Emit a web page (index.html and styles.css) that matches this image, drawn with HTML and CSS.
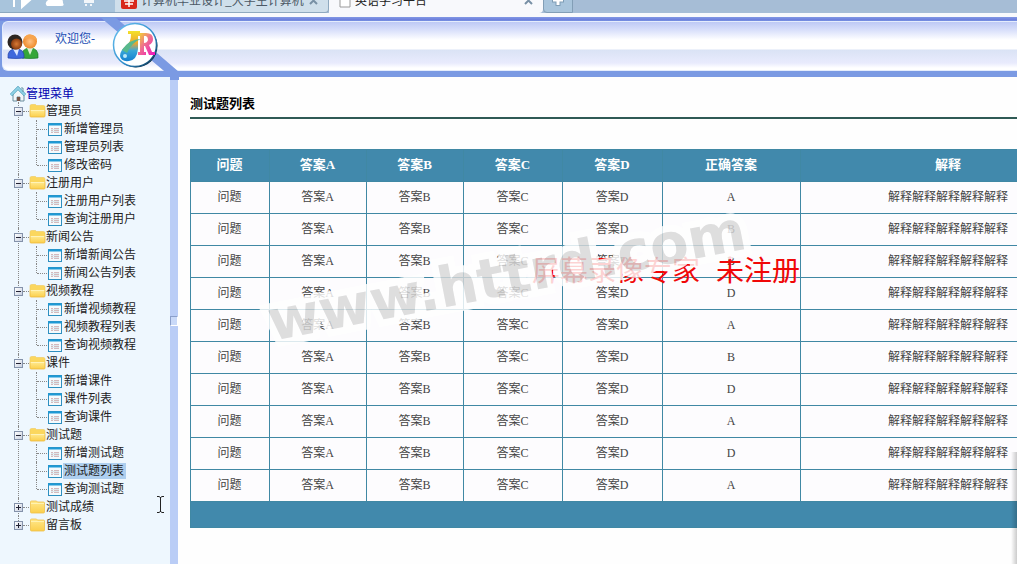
FILE: index.html
```html
<!DOCTYPE html>
<html lang="zh-CN">
<head>
<meta charset="utf-8">
<title>英语学习平台</title>
<link rel="stylesheet" href="styles.css">
</head>
<body>
<svg class="sprites" aria-hidden="true">
  <defs>
    <linearGradient id="fold" x1="0" y1="0" x2="0" y2="1"><stop offset="0" stop-color="#ffe88c"/><stop offset="1" stop-color="#fbcf4c"/></linearGradient>
    <symbol id="i-open" viewBox="0 0 16 14">
      <path d="M.5 2q0-1.500 1.500-1.500h4l1 1h7q1.500 0 1.500 1.500v4H.5z" fill="#fbd75e" stroke="#f0c95a" stroke-width=".6"/>
      <path d="M.5 6.500h15v5.500q0 1-1 1h-13q-1 0-1-1z" fill="url(#fold)" stroke="#edb93c" stroke-width=".8"/>
      <path d="M1 6.500h14" stroke="#fff3b8"/>
    </symbol>
    <symbol id="i-closed" viewBox="0 0 16 14">
      <path d="M1 2q0-1 1-1h5l1 1h6q1 0 1 1v9q0 1-1 1H2q-1 0-1-1z" fill="url(#fold)" stroke="#efc04a" stroke-width=".8"/>
      <path d="M1.500 3.500h13" stroke="#fff2b0"/>
    </symbol>
    <symbol id="i-page" viewBox="0 0 14 13">
      <rect x=".5" y=".5" width="13" height="12" fill="#f4fafd" stroke="#2e8fc0"/>
      <path d="M0 1.500h14" stroke="#1e9ad6" stroke-width="2"/>
      <path d="M3 5.500h2m1 0h5M3 7.500h2m1 0h5M3 9.500h2m1 0h5" stroke="#d3b9bd"/>
      <path d="M3 6.500h8M3 8.500h8" stroke="#c9dbe2" stroke-width=".6"/>
    </symbol>
  </defs>
</svg>

<nav class="tabs" aria-label="标签页">
  <div class="tools">
    <svg width="95" height="26" viewBox="0 0 95 26" aria-hidden="true">
      <path d="M14 9v11M18 9h4v11l8-7-8-7" fill="#fff" stroke="#fff" stroke-width="2"/>
      <path d="M47 19q-3-3 1-6 3-6 9-3 6 0 6 6 2 3-2 3z" fill="#fff"/>
      <path d="M84 8h10v8H84zM85 17h2v2h-2zm5 0h2v2h-2z" fill="#f2f6fa"/>
    </svg>
  </div>
  <div class="tab">
    <svg width="16" height="20" viewBox="0 0 16 20" aria-hidden="true"><rect y="2" width="16" height="17" rx="2" fill="#d8281c"/><path d="M3 11h10M8 7v10M4 14h8M5 6v4M11 6v4" stroke="#fff" stroke-width="1.500"/></svg>
    <span class="tab-name">计算机毕业设计_大学生计算机</span>
    <button class="tab-close" aria-label="关闭"><svg width="9" height="9" viewBox="0 0 9 9"><path d="M1 1l7 7M8 1L1 8" stroke="#7890a5" stroke-width="2"/></svg></button>
  </div>
  <div class="tab active">
    <svg width="12" height="16" viewBox="0 0 12 16" aria-hidden="true"><path d="M1 1h7l3 3v11H1z" fill="#fff" stroke="#9a9a9a"/></svg>
    <span class="tab-name">英语学习平台</span>
    <button class="tab-close" aria-label="关闭"><svg width="9" height="9" viewBox="0 0 9 9"><path d="M1 1l7 7M8 1L1 8" stroke="#7890a5" stroke-width="2"/></svg></button>
  </div>
  <button class="tab-new" aria-label="新标签页"><svg width="12" height="12" viewBox="0 0 12 12"><path d="M6 0v12M0 6h12" stroke="#7f9db5" stroke-width="5"/><path d="M6 1v10M1 6h10" stroke="#fff" stroke-width="3"/></svg></button>
</nav>

<header class="banner">
  <div class="panel">
    <svg class="users" width="32" height="26" viewBox="0 0 32 26" aria-hidden="true">
      <defs>
        <radialGradient id="f1"><stop offset="0" stop-color="#d87a35"/><stop offset="1" stop-color="#8a3b10"/></radialGradient>
        <radialGradient id="f2"><stop offset="0" stop-color="#ffc182"/><stop offset="1" stop-color="#ee8a2a"/></radialGradient>
      </defs>
      <path d="M15 25q-1-10 8-10t8 10q-8 1-16 0z" fill="#35a63a" stroke="#1b7a2a" stroke-width=".7"/>
      <path d="M20 15l3 7 3-7z" fill="#d9f0d0"/>
      <circle cx="23" cy="8.500" r="7" fill="url(#f2)"/>
      <path d="M17 6q2-6 8-4 5 1 5 6-4-4-13-2z" fill="#f7a54e"/>
      <path d="M1 25q-1-9 8-9t8 9q-8 1-16 0z" fill="#3f68dc" stroke="#2142a8" stroke-width=".7"/>
      <path d="M6 16l4 7 2-7z" fill="#dce6ff"/>
      <circle cx="8" cy="9" r="7.500" fill="#2c2622"/>
      <ellipse cx="9.500" cy="11" rx="5.500" ry="5.500" fill="url(#f1)"/>
    </svg>
    <span class="welcome">欢迎您-</span>
  </div>
  <svg class="logo" width="84" height="63" viewBox="0 0 84 63" role="img" aria-label="JR">
    <defs>
      <linearGradient id="jg" x1="0" y1="0" x2="0" y2="1"><stop offset="0" stop-color="#f3e22a"/><stop offset=".4" stop-color="#eda52c"/><stop offset=".65" stop-color="#38a7d8"/><stop offset="1" stop-color="#1480d0"/></linearGradient>
      <linearGradient id="rg" x1="0" y1="0" x2="1" y2="1"><stop offset="0" stop-color="#f4dc28"/><stop offset=".45" stop-color="#ee6f90"/><stop offset="1" stop-color="#f010c0"/></linearGradient>
      <linearGradient id="ring" x1="0" y1="0" x2="1" y2="1"><stop offset="0" stop-color="#6cc3f2"/><stop offset=".6" stop-color="#2f8dcc"/><stop offset="1" stop-color="#082c48"/></linearGradient>
    </defs>
    <path d="M5 0h15L84 55v8h-9v-4z" fill="#7b9ae3"/>
    <circle cx="41" cy="29" r="21.500" fill="#0c3048"/>
    <circle cx="40" cy="28" r="21.500" fill="#fff" stroke="url(#ring)" stroke-width="1.500"/>
    <path d="M33 14h12v3h-2v15q-1 11-9 12-8 1-9-5 0-6 7-11 4-3 4-11h-3z" fill="url(#jg)"/>
    <path d="M43 16h8q7 0 7 6 0 4-4 6l3 7h3v3h-6l-4-9h-1v6h2v3h-8v-3h2V19h-2z" fill="url(#rg)"/>
    <path d="M49 19h2q2 1 2 4-1 3-4 3z" fill="#fff"/>
    <path d="M27 33q7-11 19-11-9 3-14 14z" fill="#58b88c"/>
    <circle cx="30" cy="39" r="2" fill="#b8e8fa"/>
  </svg>
</header>

<div class="frame">
  <aside class="sidebar">
    <a class="root" href="#"><svg width="16" height="16" viewBox="0 0 16 16" aria-hidden="true"><path d="M3 8v7h4v-4h3v4h4V8L8 3z" fill="#f1f6f8" stroke="#6a8e9e"/><path d="M1 9l7-7 7 7" fill="none" stroke="#398fae" stroke-width="3"/><path d="M1 9l7-7 7 7" fill="none" stroke="#8fd2e5" stroke-width="2"/><path d="M11 2h2v4" fill="none" stroke="#6495a5"/><path d="M7 11h3v4H7z" fill="#765344"/></svg>管理菜单</a>
    <ul class="tree">
      <li><div class="node"><button class="toggle" aria-label="收起"></button><svg class="folder"><use href="#i-open"/></svg>管理员</div>
        <ul><li><a href="#"><svg><use href="#i-page"/></svg><span>新增管理员</span></a></li><li><a href="#"><svg><use href="#i-page"/></svg><span>管理员列表</span></a></li><li><a href="#"><svg><use href="#i-page"/></svg><span>修改密码</span></a></li></ul></li>
      <li><div class="node"><button class="toggle" aria-label="收起"></button><svg class="folder"><use href="#i-open"/></svg>注册用户</div>
        <ul><li><a href="#"><svg><use href="#i-page"/></svg><span>注册用户列表</span></a></li><li><a href="#"><svg><use href="#i-page"/></svg><span>查询注册用户</span></a></li></ul></li>
      <li><div class="node"><button class="toggle" aria-label="收起"></button><svg class="folder"><use href="#i-open"/></svg>新闻公告</div>
        <ul><li><a href="#"><svg><use href="#i-page"/></svg><span>新增新闻公告</span></a></li><li><a href="#"><svg><use href="#i-page"/></svg><span>新闻公告列表</span></a></li></ul></li>
      <li><div class="node"><button class="toggle" aria-label="收起"></button><svg class="folder"><use href="#i-open"/></svg>视频教程</div>
        <ul><li><a href="#"><svg><use href="#i-page"/></svg><span>新增视频教程</span></a></li><li><a href="#"><svg><use href="#i-page"/></svg><span>视频教程列表</span></a></li><li><a href="#"><svg><use href="#i-page"/></svg><span>查询视频教程</span></a></li></ul></li>
      <li><div class="node"><button class="toggle" aria-label="收起"></button><svg class="folder"><use href="#i-open"/></svg>课件</div>
        <ul><li><a href="#"><svg><use href="#i-page"/></svg><span>新增课件</span></a></li><li><a href="#"><svg><use href="#i-page"/></svg><span>课件列表</span></a></li><li><a href="#"><svg><use href="#i-page"/></svg><span>查询课件</span></a></li></ul></li>
      <li><div class="node"><button class="toggle" aria-label="收起"></button><svg class="folder"><use href="#i-open"/></svg>测试题</div>
        <ul><li><a href="#"><svg><use href="#i-page"/></svg><span>新增测试题</span></a></li><li><a href="#" aria-current="page"><svg><use href="#i-page"/></svg><span>测试题列表</span></a></li><li><a href="#"><svg><use href="#i-page"/></svg><span>查询测试题</span></a></li></ul></li>
      <li><div class="node"><button class="toggle plus" aria-label="展开"></button><svg class="folder"><use href="#i-closed"/></svg>测试成绩</div></li>
      <li><div class="node"><button class="toggle plus" aria-label="展开"></button><svg class="folder"><use href="#i-closed"/></svg>留言板</div></li>
    </ul>
    <svg class="ibeam" width="9" height="17" viewBox="0 0 9 17" aria-hidden="true"><path d="M1 .5h2l1.500 1L6 .5h2M4.500 1v15M1 16.500h2l1.500-1 1.500 1h2" fill="none" stroke="#222"/></svg>
  </aside>
  <div class="splitter"><button class="grip" aria-label="折叠菜单"></button></div>
  <main class="content">
    <h1>测试题列表</h1>
    <table class="grid">
      <colgroup><col class="c-q"><col class="c-a"><col class="c-a"><col class="c-c"><col class="c-d"><col class="c-r"><col></colgroup>
      <thead><tr><th>问题</th><th>答案A</th><th>答案B</th><th>答案C</th><th>答案D</th><th>正确答案</th><th>解释</th></tr></thead>
      <tbody>
        <tr><td>问题</td><td>答案A</td><td>答案B</td><td>答案C</td><td>答案D</td><td>A</td><td>解释解释解释解释解释</td></tr>
        <tr><td>问题</td><td>答案A</td><td>答案B</td><td>答案C</td><td>答案D</td><td>B</td><td>解释解释解释解释解释</td></tr>
        <tr><td>问题</td><td>答案A</td><td>答案B</td><td>答案C</td><td>答案D</td><td>B</td><td>解释解释解释解释解释</td></tr>
        <tr><td>问题</td><td>答案A</td><td>答案B</td><td>答案C</td><td>答案D</td><td>D</td><td>解释解释解释解释解释</td></tr>
        <tr><td>问题</td><td>答案A</td><td>答案B</td><td>答案C</td><td>答案D</td><td>A</td><td>解释解释解释解释解释</td></tr>
        <tr><td>问题</td><td>答案A</td><td>答案B</td><td>答案C</td><td>答案D</td><td>B</td><td>解释解释解释解释解释</td></tr>
        <tr><td>问题</td><td>答案A</td><td>答案B</td><td>答案C</td><td>答案D</td><td>D</td><td>解释解释解释解释解释</td></tr>
        <tr><td>问题</td><td>答案A</td><td>答案B</td><td>答案C</td><td>答案D</td><td>A</td><td>解释解释解释解释解释</td></tr>
        <tr><td>问题</td><td>答案A</td><td>答案B</td><td>答案C</td><td>答案D</td><td>D</td><td>解释解释解释解释解释</td></tr>
        <tr><td>问题</td><td>答案A</td><td>答案B</td><td>答案C</td><td>答案D</td><td>A</td><td>解释解释解释解释解释</td></tr>
      </tbody>
      <tfoot><tr><td colspan="7"></td></tr></tfoot>
    </table>
    <div class="notice"><span>屏幕录像专家</span><span>未注册</span></div>
    <div class="watermark">www.httrd.com</div>
    <div class="edge-shadow"></div>
  </main>
</div>
</body>
</html>
```
FILE: styles.css
```css
* { box-sizing: border-box; }
body {
  margin: 0;
  min-height: 100vh;
  display: flex;
  flex-direction: column;
  overflow: hidden;
  background: #fefefe;
  font: 12px/18px "Liberation Serif", "Noto Sans CJK SC", serif;
  color: #333;
}
button { padding: 0; border: 0; background: none; font: inherit; }
ul { margin: 0; padding: 0; list-style: none; }
a { color: inherit; text-decoration: none; }
svg { display: block; flex: none; }
.sprites { position: absolute; width: 0; height: 0; }

/* browser tabs */
.tabs {
  display: flex;
  align-items: flex-end;
  height: 17px;
  padding-bottom: 4px;
  overflow: hidden;
  background: linear-gradient(#a6bdd6 13px, #f8f9fc 13px);
  font-family: "Noto Sans CJK SC", sans-serif;
}
.tools { width: 115px; height: 26px; border-bottom: 1px solid #8ba7bf; background: #a8c4dc; }
.tab {
  display: flex;
  align-items: center;
  gap: 4px;
  width: 214px;
  height: 26px;
  padding: 0 10px 0 6px;
  border: 1px solid #8fa9bf;
  border-left: 0;
  border-radius: 0 0 4px 0;
  background: #cfdfeb;
  color: #4c5966;
}
.tab.active { border: 0; background: #f8f9fc; color: #222; padding-left: 10px; }
.tab-name { flex: 1; white-space: nowrap; overflow: hidden; }
.tab-new {
  display: grid;
  place-items: center;
  width: 30px;
  height: 26px;
  border: 1px solid #829eb6;
  border-radius: 0 0 0 4px;
  background: #a9c5dc;
}

/* banner */
.banner {
  position: relative;
  padding: 4px 0 6px 2px;
  background: linear-gradient(#8298e4, #6c7ddc 3px, #7b9ae3 4px, #7b9ae3);
}
.panel {
  display: flex;
  align-items: center;
  gap: 16px;
  height: 50px;
  padding-left: 4px;
  border: 1px solid #e4ecfc;
  border-right: 0;
  border-radius: 6px 0 0 6px;
  background: linear-gradient(#bdc9f5, #d8dffa 8px, #fff 18px, #fff 27px, #dae3f5 28px, #e9ebfd 41px, #fff 46px);
}
.welcome { padding-bottom: 14px; color: #1c4fb4; }
.logo { position: absolute; left: 95px; top: 0; z-index: 1; }

/* frame */
.frame { flex: 1; display: flex; }
.sidebar { position: relative; flex: none; width: 170px; padding: 8px 0 0 10px; background: #eef7fe; color: #222; }
.root { display: flex; align-items: center; height: 17px; color: #0000b0; }
.tree { position: relative; }
.tree > li { position: relative; }
.tree > li::before { content: ""; position: absolute; left: 8px; top: 0; bottom: 0; border-left: 1px dotted #888; }
.tree > li:last-child::before { bottom: 9px; }
.node { position: relative; display: flex; align-items: center; height: 18px; padding-left: 4px; }
.node::before { content: ""; position: absolute; left: 13px; width: 6px; top: 9px; border-top: 1px dotted #888; }
.toggle {
  position: relative;
  width: 9px;
  height: 9px;
  margin-right: 6px;
  border: 1px solid #8492aa;
  background: linear-gradient(135deg, #fff, #c8d0e0);
}
.toggle::before { content: ""; position: absolute; left: 1px; right: 1px; top: 3px; border-top: 1px solid #223; }
.plus::after { content: ""; position: absolute; top: 1px; bottom: 1px; left: 3px; border-left: 1px solid #223; }
.folder { width: 17px; height: 14px; }
.tree ul li { position: relative; padding-left: 38px; }
.tree ul li::before { content: ""; position: absolute; left: 26px; top: 0; bottom: 0; border-left: 1px dotted #888; }
.tree ul li:last-child::before { bottom: 9px; }
.tree ul li::after { content: ""; position: absolute; left: 27px; top: 9px; width: 10px; border-top: 1px dotted #888; }
.tree a { display: flex; align-items: center; gap: 1px; height: 18px; }
.tree a svg { width: 14px; height: 13px; }
.tree a span { padding: 0 2px 0 1px; line-height: 16px; }
.tree a[aria-current] span { background: #aecfef; }
.ibeam { position: absolute; left: 156px; top: 419px; }
.splitter { flex: none; display: flex; align-items: center; width: 8px; background: #bacdf6; }
.grip { width: 8px; height: 10px; border: 1px solid; border-color: #8b9fca #fff #fff #8b9fca; background: #c9d9f8; }

/* content */
.content { position: relative; flex: 1; min-width: 0; padding: 18px 0 0 12px; overflow: hidden; }
h1 { margin: 0 0 30px; padding-bottom: 4px; border-bottom: 2px solid #2f5a55; font-size: 13px; line-height: 18px; color: #000; }
.grid { width: calc(100% + 80px); table-layout: fixed; border-collapse: collapse; text-align: center; }
.c-q { width: 79px; }
.c-a { width: 97px; }
.c-c { width: 99px; }
.c-d { width: 100px; }
.c-r { width: 138px; }
.grid th, .grid td { height: 32px; padding: 0 1px 2px 0; border: 1px solid #4088a4; }
.grid th { background: #4189ac; color: #fff; font-size: 13px; }
.grid td { background: #fdfcfe; color: #444; }
.grid tfoot td { height: 26px; background: #4189ac; }

/* overlays */
.notice {
  position: absolute;
  left: 354px;
  top: 174px;
  display: flex;
  gap: 16px;
  font: 400 28px/36px "Noto Sans CJK SC", sans-serif;
  color: #f00808;
  white-space: nowrap;
}
.watermark {
  position: absolute;
  left: 86px;
  top: 163px;
  font: bold 56px/72px "DejaVu Sans", sans-serif;
  color: #d8d8d8;
  -webkit-text-stroke: 14px #fff;
  paint-order: stroke fill;
  opacity: .82;
  transform: rotate(-11deg);
  white-space: nowrap;
}
.edge-shadow { position: absolute; right: 0; top: 375px; bottom: 0; width: 6px; background: linear-gradient(90deg, transparent, #0003); }
```
